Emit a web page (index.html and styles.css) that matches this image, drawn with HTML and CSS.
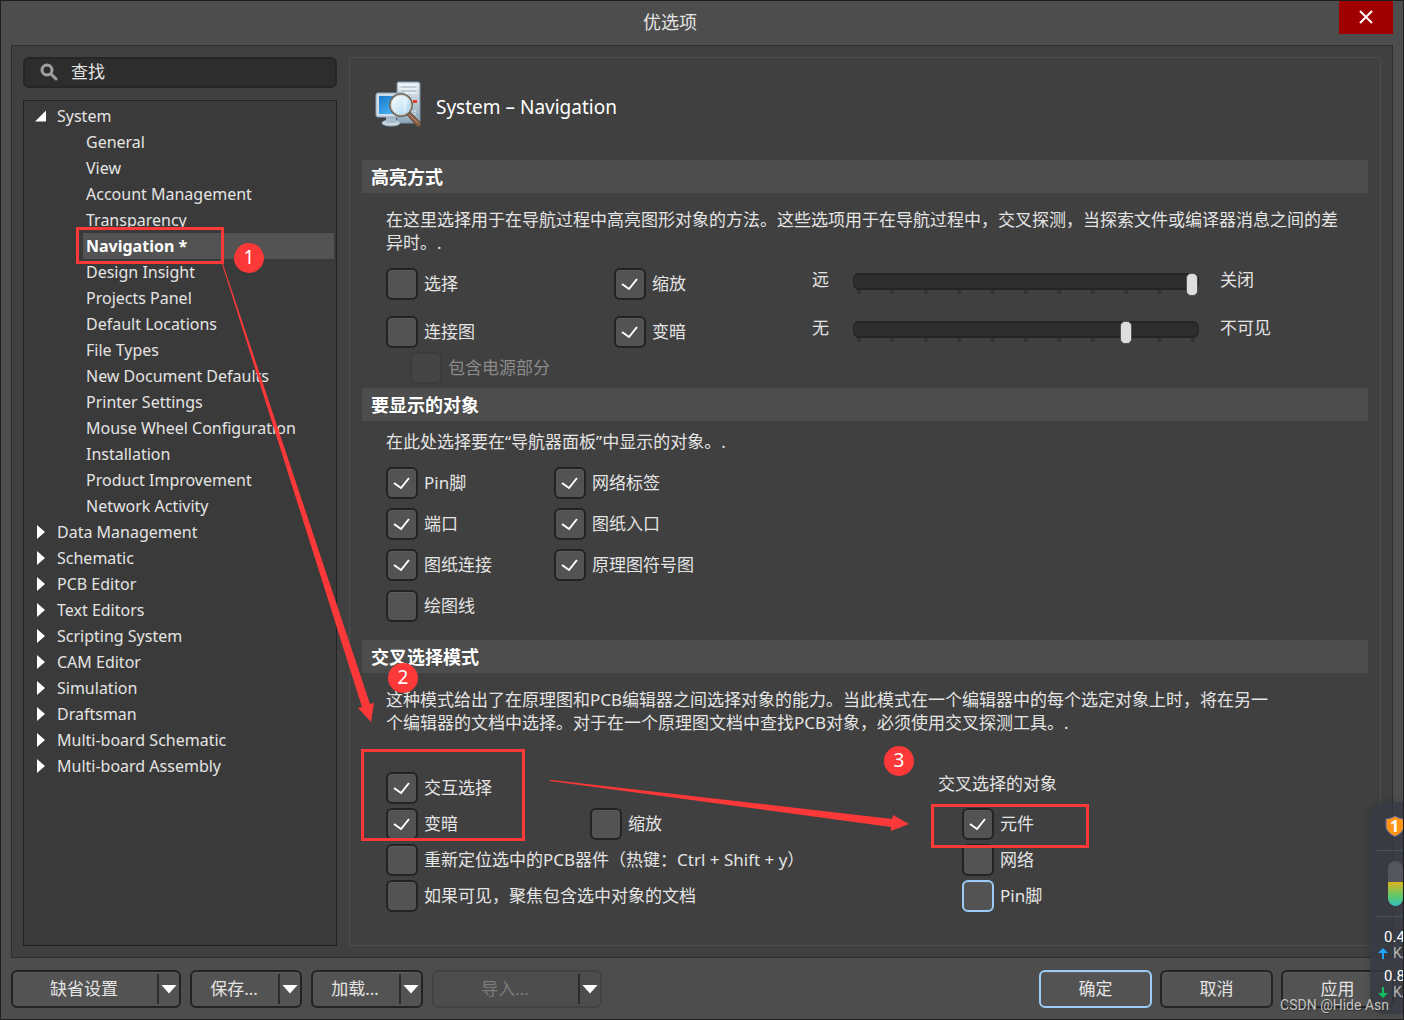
FILE: index.html
```html
<!DOCTYPE html>
<html lang="zh-CN">
<head>
<meta charset="utf-8">
<meta name="viewport" content="width=device-width, initial-scale=1">
<title>优选项</title>
<link rel="stylesheet" href="styles.css">
</head>
<body>
<div class="window">
  <header class="titlebar">
    <h1 class="titlebar-text">优选项</h1>
    <button class="close" type="button" aria-label="关闭窗口">
      <svg width="14" height="14" viewBox="0 0 14 14"><path d="M1 1L13 13M13 1L1 13" stroke="#fff" stroke-width="2" fill="none"/></svg>
    </button>
  </header>

  <main class="main">
    <aside class="sidebar">
      <div class="search">
        <svg class="search-icon" width="18" height="18" viewBox="0 0 18 18" fill="none" stroke="#a0a0a0"><circle cx="7" cy="7" r="5" stroke-width="3"/><path d="M11 11L16 16" stroke-width="3" stroke-linecap="round"/></svg>
        <input class="search-input" type="text" placeholder="查找" aria-label="查找">
      </div>
      <nav class="tree">
        <ul class="tree-list">
          <li><a class="node open" href="#">System</a>
            <ul class="tree-list children">
              <li><a class="leaf" href="#">General</a></li>
              <li><a class="leaf" href="#">View</a></li>
              <li><a class="leaf" href="#">Account Management</a></li>
              <li><a class="leaf" href="#">Transparency</a></li>
              <li><a class="leaf selected" href="#">Navigation *</a></li>
              <li><a class="leaf" href="#">Design Insight</a></li>
              <li><a class="leaf" href="#">Projects Panel</a></li>
              <li><a class="leaf" href="#">Default Locations</a></li>
              <li><a class="leaf" href="#">File Types</a></li>
              <li><a class="leaf" href="#">New Document Defaults</a></li>
              <li><a class="leaf" href="#">Printer Settings</a></li>
              <li><a class="leaf" href="#">Mouse Wheel Configuration</a></li>
              <li><a class="leaf" href="#">Installation</a></li>
              <li><a class="leaf" href="#">Product Improvement</a></li>
              <li><a class="leaf" href="#">Network Activity</a></li>
            </ul>
          </li>
          <li><a class="node" href="#">Data Management</a></li>
          <li><a class="node" href="#">Schematic</a></li>
          <li><a class="node" href="#">PCB Editor</a></li>
          <li><a class="node" href="#">Text Editors</a></li>
          <li><a class="node" href="#">Scripting System</a></li>
          <li><a class="node" href="#">CAM Editor</a></li>
          <li><a class="node" href="#">Simulation</a></li>
          <li><a class="node" href="#">Draftsman</a></li>
          <li><a class="node" href="#">Multi-board Schematic</a></li>
          <li><a class="node" href="#">Multi-board Assembly</a></li>
        </ul>
      </nav>
    </aside>

    <div class="content">
      <div class="page-head">
        <svg class="page-icon" width="48" height="48" viewBox="0 0 48 48">
          <defs>
            <linearGradient id="tower" x1="0" y1="0" x2="0" y2="1"><stop offset="0" stop-color="#e4edf3"/><stop offset="1" stop-color="#8fa6b8"/></linearGradient>
            <linearGradient id="screen" x1="0" y1="0" x2="1" y2="1"><stop offset="0" stop-color="#1b78cf"/><stop offset="1" stop-color="#54c4fa"/></linearGradient>
            <linearGradient id="lens" x1="0" y1="0" x2="1" y2="1"><stop offset="0" stop-color="#fff"/><stop offset=".55" stop-color="#cfe9f8"/><stop offset="1" stop-color="#8fc8ea"/></linearGradient>
          </defs>
          <path d="M24 1h20q2 0 2 2v37q0 2-2 2H26q-3 0-3-3V2z" fill="url(#tower)" stroke="#7890a5"/>
          <path d="M25 4h18M25 8h18M25 12h18" stroke="#fff" stroke-width="1"/>
          <path d="M27 6h15M27 10h15" stroke="#a5b8c7"/>
          <path d="M34 30h9M34 33h9M34 36h7" stroke="#eef5f9" stroke-dasharray="2 1"/>
          <rect x="39" y="19" width="4" height="3" fill="#e43b35"/>
          <ellipse cx="17" cy="42" rx="9" ry="3" fill="#cbd9e2" stroke="#9db2c2"/>
          <path d="M12 36h10v6H12z" fill="#a9bccb"/>
          <rect x="2" y="12" width="29" height="24" rx="2" fill="#cddce6" stroke="#8ea5b8"/>
          <rect x="5" y="15" width="23" height="18" fill="url(#screen)"/>
          <path d="M33 34L36 31L46 41Q48 47 43 45Z" fill="#8a6049" stroke="#69503f"/>
          <path d="M36 34L44 42" stroke="#bd927a"/>
          <circle cx="27" cy="24" r="11" fill="url(#lens)" stroke="#6e6a64" stroke-width="2"/>
          <circle cx="27" cy="24" r="10" fill="none" stroke="#d8d0c4"/>
          <path d="M30 17v15M32 17v14" stroke="#fff" opacity=".7"/>
        </svg>
        <h2 class="page-title">System – Navigation</h2>
      </div>

      <section>
        <h3 class="section-title">高亮方式</h3>
        <div class="section-body highlight">
          <p class="intro">在这里选择用于在导航过程中高亮图形对象的方法。这些选项用于在导航过程中，交叉探测，当探索文件或编译器消息之间的差异时。.</p>
          <div class="highlight-grid">
            <label class="check"><input type="checkbox">选择</label>
            <label class="check"><input type="checkbox" checked>缩放</label>
            <div class="slider-row">
              <label class="slider-label" for="zoom">远</label>
              <div class="slider"><input id="zoom" type="range" min="0" max="10" value="10"></div>
              <span>关闭</span>
            </div>
            <label class="check"><input type="checkbox">连接图</label>
            <label class="check"><input type="checkbox" checked>变暗</label>
            <div class="slider-row">
              <label class="slider-label" for="dim">无</label>
              <div class="slider"><input id="dim" type="range" min="0" max="10" value="8"></div>
              <span>不可见</span>
            </div>
          </div>
          <label class="check sub disabled"><input type="checkbox" disabled>包含电源部分</label>
        </div>
      </section>

      <section>
        <h3 class="section-title">要显示的对象</h3>
        <div class="section-body objects">
          <p class="intro">在此处选择要在“导航器面板”中显示的对象。.</p>
          <div class="objects-grid">
            <label class="check"><input type="checkbox" checked>Pin脚</label>
            <label class="check"><input type="checkbox" checked>网络标签</label>
            <label class="check"><input type="checkbox" checked>端口</label>
            <label class="check"><input type="checkbox" checked>图纸入口</label>
            <label class="check"><input type="checkbox" checked>图纸连接</label>
            <label class="check"><input type="checkbox" checked>原理图符号图</label>
            <label class="check"><input type="checkbox">绘图线</label>
          </div>
        </div>
      </section>

      <section>
        <h3 class="section-title">交叉选择模式</h3>
        <div class="section-body cross">
          <p class="intro narrow">这种模式给出了在原理图和PCB编辑器之间选择对象的能力。当此模式在一个编辑器中的每个选定对象上时，将在另一个编辑器的文档中选择。对于在一个原理图文档中查找PCB对象，必须使用交叉探测工具。.</p>
          <div class="cross-columns">
            <div class="cross-modes">
              <label class="check wide"><input type="checkbox" checked>交互选择</label>
              <label class="check"><input type="checkbox" checked>变暗</label>
              <label class="check"><input type="checkbox">缩放</label>
              <label class="check wide"><input type="checkbox">重新定位选中的PCB器件（热键：Ctrl + Shift + y）</label>
              <label class="check wide"><input type="checkbox">如果可见，聚焦包含选中对象的文档</label>
            </div>
            <fieldset class="cross-objects">
              <legend>交叉选择的对象</legend>
              <label class="check"><input type="checkbox" checked>元件</label>
              <label class="check"><input type="checkbox">网络</label>
              <label class="check"><input class="focused" type="checkbox">Pin脚</label>
            </fieldset>
          </div>
        </div>
      </section>
    </div>
  </main>

  <footer class="footer">
    <div class="split large"><button type="button">缺省设置</button><button class="drop" type="button" aria-label="缺省设置菜单"></button></div>
    <div class="split"><button type="button">保存...</button><button class="drop" type="button" aria-label="保存菜单"></button></div>
    <div class="split"><button type="button">加载...</button><button class="drop" type="button" aria-label="加载菜单"></button></div>
    <div class="split large off"><button type="button" disabled>导入...</button><button class="drop" type="button" aria-label="导入菜单"></button></div>
    <div class="actions">
      <button class="btn focused" type="button">确定</button>
      <button class="btn" type="button">取消</button>
      <button class="btn" type="button">应用</button>
    </div>
  </footer>

  <div class="monitor">
    <svg class="shield" width="20" height="22" viewBox="0 0 20 22"><path d="M10 1Q14 4 19 4V12Q18 18 10 21.500Q2 18 1 12V4Q6 4 10 1Z" fill="#ff9318" stroke="#5b6ba8"/></svg>
    <span class="shield-count">1</span>
    <div class="gauge"></div>
    <div class="rate"><b>0.4</b><span><svg width="10" height="11" viewBox="0 0 10 11"><path d="M5 0L10 5H6V11H4V5H0Z" fill="#1ea7ff"/></svg>K/</span></div>
    <div class="rate"><b>0.8</b><span><svg width="10" height="11" viewBox="0 0 10 11"><path d="M5 11L10 6H6V0H4V6H0Z" fill="#10c060"/></svg>K/</span></div>
  </div>
  <div class="watermark">CSDN @Hide Asn</div>

  <div class="notes">
    <svg class="arrows" width="1000" height="900" viewBox="0 0 1000 900" fill="#fc3838">
      <path d="M222 264L223 264L370 704L374 703L371 722L358 708L362 707Z"/>
      <path d="M550 780V781L891 827V831L909 824L893 815L892 819L552 780Z"/>
    </svg>
    <div class="frame frame-1"></div>
    <div class="frame frame-2"></div>
    <div class="frame frame-3"></div>
    <span class="pin pin-1">1</span>
    <span class="pin pin-2">2</span>
    <span class="pin pin-3">3</span>
  </div>
</div>
</body>
</html>
```
FILE: styles.css
```css
* {
  box-sizing: border-box;
}

body {
  margin: 0;
  background: #4d4d4d;
  color: #e4e4e4;
  font: 17px/23px "Noto Sans", "Noto Sans CJK SC", sans-serif;
}

h1, h2, h3, p, ul, fieldset {
  margin: 0;
  padding: 0;
}

button, input {
  font: inherit;
  color: inherit;
}

.window {
  position: relative;
  display: flex;
  flex-direction: column;
  min-height: 100vh;
  border: 1px solid #1d1d1d;
  overflow: hidden;
}

/* Title bar */
.titlebar {
  display: flex;
  height: 44px;
  padding-right: 10px;
}

.titlebar-text {
  flex: 1;
  text-align: center;
  font-size: 18px;
  font-weight: 400;
  line-height: 43px;
}

.close {
  display: grid;
  place-items: center;
  width: 54px;
  height: 33px;
  padding: 0 0 2px;
  border: 0;
  background: #a00000;
}

/* Main area */
.main {
  display: flex;
  flex: 1;
  gap: 12px;
  margin: 0 10px;
  padding: 11px;
  border: 1px solid #2e2e2e;
  background: #404040;
}

.sidebar {
  display: flex;
  flex: none;
  flex-direction: column;
  gap: 12px;
  width: 314px;
}

.search {
  display: flex;
  align-items: center;
  gap: 13px;
  height: 31px;
  padding: 0 15px 2px;
  border: 2px solid #262626;
  border-radius: 6px;
  background: #2d2d2d;
}

.search-icon {
  flex: none;
}

.search-input {
  flex: 1;
  min-width: 0;
  padding: 0;
  border: 0;
  outline: 0;
  background: none;
}

.search-input::placeholder {
  color: #e4e4e4;
  opacity: 1;
}

.tree {
  flex: 1;
  padding: 2px;
  border: 1px solid #222;
  background: #3a3a3a;
}

.tree-list {
  list-style: none;
}

.tree a {
  display: flex;
  align-items: center;
  height: 26px;
  color: inherit;
  font-size: 16px;
  text-decoration: none;
}

.node {
  gap: 11px;
  padding-left: 11px;
}

.node::before {
  content: "";
  width: 9px;
  height: 14px;
  background: #fff;
  clip-path: polygon(0 0, 8px 50%, 0 100%);
}

.node.open::before {
  width: 11px;
  height: 11px;
  margin: 0 0 0 -2px;
  clip-path: polygon(100% 0, 100% 100%, 0 100%);
}

.children {
  padding-left: 57px;
}

.leaf {
  padding-left: 3px;
}

.tree .selected {
  background: #535353;
  color: #fff;
  font-weight: 700;
}

/* Page content */
.content {
  flex: 1;
  min-width: 0;
  padding: 0 12px;
  border: 1px solid #4d4d4d;
}

.page-head {
  display: flex;
  align-items: center;
  gap: 14px;
  height: 102px;
  padding: 0 12px 8px;
}

.page-title {
  font-size: 19px;
  font-weight: 400;
  color: #fff;
  padding-top: 4px;
}

.section-title {
  height: 33px;
  padding-left: 9px;
  background: #4d4d4d;
  color: #fff;
  font-size: 18px;
  font-weight: 700;
  line-height: 35px;
}

.section-body {
  padding-left: 24px;
}

.highlight {
  padding-top: 15px;
  padding-bottom: 4px;
}

.objects {
  padding-top: 9px;
  padding-bottom: 18px;
}

.cross {
  padding-top: 15px;
  padding-bottom: 32px;
}

.intro {
  margin-bottom: 14px;
  padding-right: 24px;
}

.narrow {
  max-width: 910px;
}

.check {
  display: flex;
  align-items: center;
  gap: 6px;
  line-height: 24px;
  white-space: nowrap;
}

.check input {
  flex: none;
  appearance: none;
  width: 32px;
  height: 32px;
  margin: 0;
  border: 2px solid #232323;
  border-radius: 6px;
  background: #535353;
  box-shadow: inset 0 1px #5d5d5d;
}

.check input:checked {
  background: #535353 url("data:image/svg+xml,%3Csvg xmlns='http://www.w3.org/2000/svg' width='28' height='28'%3E%3Cpath d='M6 14L13 19L21 9' fill='none' stroke='white' stroke-width='2'/%3E%3C/svg%3E") center no-repeat;
}

.check input.focused {
  border-color: #9ccbf8;
}

.disabled {
  color: #8b8b8b;
}

.check input:disabled {
  border-color: #3b3b3b;
  background: #444;
  box-shadow: none;
}

.highlight-grid {
  display: grid;
  grid-template-columns: 228px 198px 1fr;
  row-gap: 16px;
}

.sub {
  padding: 4px 0 0 24px;
}

.slider-row {
  display: flex;
  align-items: flex-start;
  gap: 21px;
}

.slider-label {
  width: 20px;
}

.slider {
  flex: 0 1 346px;
  height: 21px;
  margin-top: 5px;
  padding: 0 1px;
  background:
    linear-gradient(#404040, #404040) 0 0 / 100% 17px no-repeat,
    linear-gradient(90deg, #343434 4px, transparent 4px) 4px 0 / calc((100% - 12px) / 10) 100%;
}

.slider input {
  display: block;
  appearance: none;
  width: calc(100% + 2px);
  height: 17px;
  margin: 0 -1px;
  border: 2px solid #242424;
  border-width: 2px 1px;
  border-radius: 6px;
  background: #2d2d2d;
}

.slider input::-webkit-slider-thumb {
  appearance: none;
  width: 12px;
  height: 23px;
  margin-top: 6px;
  border: 1px solid #4b535a;
  border-radius: 5px;
  background: #dedede;
}

.objects-grid {
  display: grid;
  grid-template-columns: 168px 1fr;
  row-gap: 9px;
}

.cross-columns {
  display: grid;
  grid-template-columns: 552px 1fr;
  padding-top: 24px;
}

.cross-modes {
  display: grid;
  grid-template-columns: 204px 1fr;
  row-gap: 4px;
}

.wide {
  grid-column: 1 / -1;
}

.cross-objects {
  display: flex;
  flex-direction: column;
  gap: 4px;
  min-width: 0;
  border: 0;
  padding-left: 24px;
}

.cross-objects legend {
  height: 36px;
  margin-left: -24px;
  padding: 0;
}

/* Footer */
.footer {
  display: flex;
  gap: 9px;
  padding: 12px 9px 11px 10px;
}

.split,
.btn {
  height: 38px;
  border: 2px solid #232323;
  border-radius: 6px;
  background: #535353;
  box-shadow: inset 0 1px #5d5d5d;
}

.split {
  display: flex;
  width: 112px;
}

.large {
  width: 170px;
}

.split button {
  flex: 1;
  padding: 0 2px 2px 0;
  border: 0;
  background: none;
}

.split .drop {
  display: flex;
  flex: none;
  justify-content: center;
  align-items: center;
  width: 22px;
  height: 30px;
  margin-top: 2px;
  padding: 0;
  border-left: 2px solid #2c2c2c;
}

.drop::before {
  content: "";
  width: 16px;
  height: 9px;
  background: #fff;
  clip-path: polygon(0 0, 100% 0, 50% 100%);
}

.off {
  border-color: #434343;
  background: #4d4d4d;
  color: #7d7d7d;
  box-shadow: none;
}

.off button:disabled {
  color: #7d7d7d;
}

.actions {
  display: flex;
  gap: 8px;
  margin-left: auto;
}

.btn {
  width: 113px;
  padding: 0 0 2px;
}

.btn.focused {
  border-color: #9ccbf8;
}

/* Desktop monitor floating above the window */
.monitor {
  position: absolute;
  right: -1px;
  top: 801px;
  width: 34px;
  height: 212px;
  padding-left: 15px;
  overflow: hidden;
  border-radius: 14px 0 0 14px;
  background: linear-gradient(#465661, #465661) 6px 48px / 100% 1px no-repeat, linear-gradient(#465661, #465661) 6px 114px / 100% 1px no-repeat, rgba(54, 57, 65, 0.8);
  box-shadow: 0 0 8px rgba(0, 0, 0, 0.15);
}

.shield {
  display: block;
  margin-top: 13px;
}

.shield-count {
  position: absolute;
  top: 13px;
  left: 20px;
  color: #fff;
  font-size: 16px;
  font-weight: 700;
}

.gauge {
  width: 15px;
  height: 45px;
  margin: 24px 0 23px 3px;
  border-radius: 8px;
  background: linear-gradient(#55565b 21px, #ddb41f 21px, #5ec96c 35px, #35bfc0);
}

.rate {
  height: 39px;
  margin-left: -1px;
  font: 14px/16px Roboto, sans-serif;
  color: #b5b5b5;
}

.rate b {
  display: block;
  color: #fff;
  font-size: 15px;
  font-weight: 400;
}

.rate span {
  display: flex;
  align-items: center;
  gap: 5px;
  margin-left: -6px;
}

.rate svg {
  flex: none;
}

.watermark {
  position: absolute;
  right: 14px;
  bottom: 5px;
  color: #c3c3c3;
  font: 14px/18px Roboto, sans-serif;
  text-shadow: 1px 1px 1px #333;
}

/* Annotations drawn over the dialog */
.notes {
  position: absolute;
  top: -1px;
  left: -1px;
  pointer-events: none;
}

.arrows {
  position: absolute;
}

.frame {
  position: absolute;
  border: 3px solid #fc3838;
}

.frame-1 {
  left: 76px;
  top: 227px;
  width: 148px;
  height: 37px;
}

.frame-2 {
  left: 361px;
  top: 749px;
  width: 164px;
  height: 92px;
}

.frame-3 {
  left: 931px;
  top: 804px;
  width: 158px;
  height: 44px;
}

.pin {
  position: absolute;
  width: 30px;
  height: 30px;
  border-radius: 50%;
  background: #fc3838;
  color: #fff;
  font-size: 19px;
  line-height: 29px;
  text-align: center;
}

.pin-1 {
  left: 234px;
  top: 243px;
}

.pin-2 {
  left: 388px;
  top: 663px;
}

.pin-3 {
  left: 884px;
  top: 746px;
}
```
